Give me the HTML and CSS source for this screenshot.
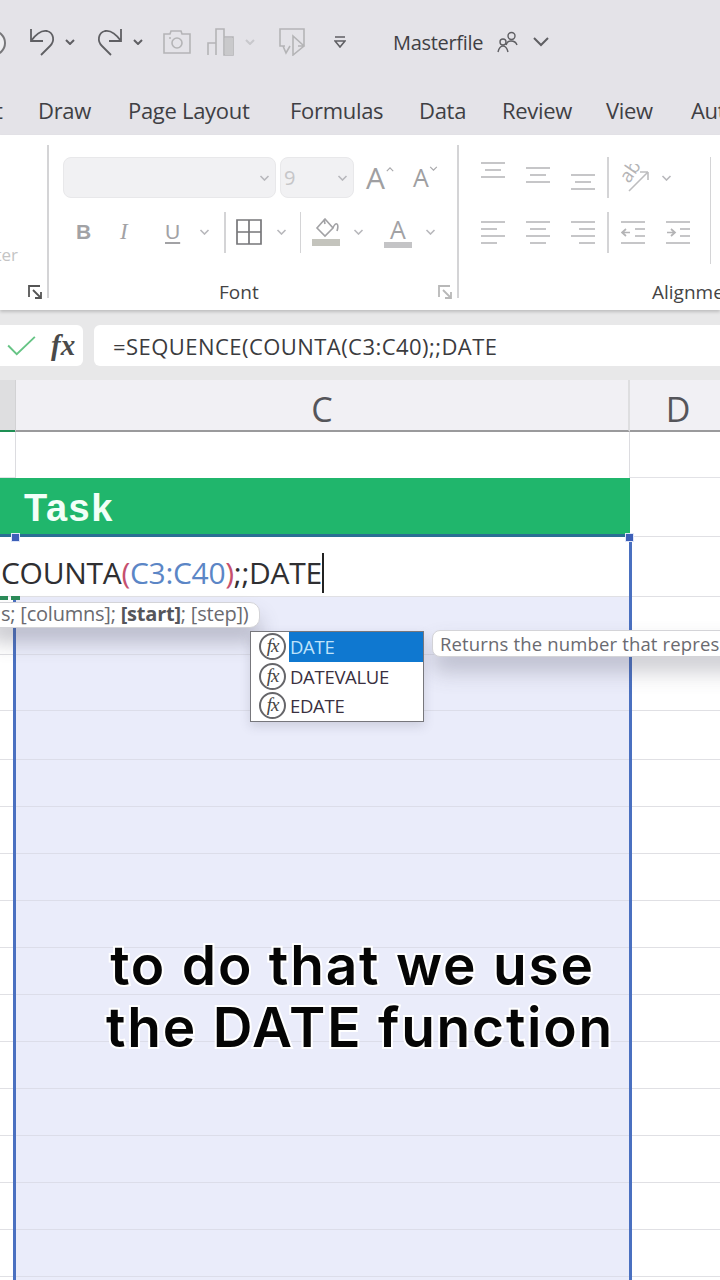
FILE: index.html
```html
<!DOCTYPE html>
<html lang="en">
<head>
<meta charset="utf-8">
<title>Masterfile</title>
<link rel="stylesheet" href="styles.css">
</head>
<body>
<div class="page">
  <header class="top">
    <div class="qat">
      <span class="circle-stub"></span>
      <svg class="ic undo" viewBox="0 0 28 28"><path d="M3 1v12h12M3 13C8 6 14 2 19 3c7 2 8 10 3 15l-9 9"/></svg>
      <svg class="ic chev-s" viewBox="0 0 10 6"><path d="M1 1l4 4 4-4"/></svg>
      <svg class="ic redo" viewBox="0 0 28 28"><path d="M25 1v12H13M25 13C20 6 14 2 9 3c-7 2-8 10-3 15l9 9"/></svg>
      <svg class="ic chev-s" viewBox="0 0 10 6"><path d="M1 1l4 4 4-4"/></svg>
      <svg class="ic muted cam" viewBox="0 0 28 24"><path d="M1 4h6l1-3h10l1 3h8v19H1z"/><circle cx="14" cy="13" r="5"/><path d="M6 8h2"/></svg>
      <svg class="ic muted chart" viewBox="0 0 28 28"><path d="M1 27V15h8v12M9 27V1h8v26M17 27V9h9v18z"/><path class="fill" d="M18 10h8v17h-8z"/></svg>
      <svg class="ic faint chev-s" viewBox="0 0 10 6"><path d="M1 1l4 4 4-4"/></svg>
      <svg class="ic muted pres" viewBox="0 0 28 28"><path d="M20 18h6V1H2v17h5M5 18l3 7 4-7M15 8v19l11-9z"/></svg>
      <svg class="ic cust" viewBox="0 0 12 12"><path d="M1 1h10M1 5h10l-5 6z"/></svg>
      <span class="doc">Masterfile</span>
      <svg class="ic people" viewBox="0 0 22 22"><circle cx="14.500" cy="5" r="3.500"/><path d="M9 14c1-3 3-4 5-4s5 1 6 4"/><circle cx="6" cy="11" r="3"/><path d="M1 21c1-4 3-6 5-6s4 2 5 6"/></svg>
      <svg class="ic chev-m" viewBox="0 0 16 10"><path d="M1 1l7 7 7-7"/></svg>
    </div>
    <nav class="tabs">
      <span class="tab-cut">t</span>
      <span class="tab t1">Draw</span>
      <span class="tab t2">Page Layout</span>
      <span class="tab t3">Formulas</span>
      <span class="tab t4">Data</span>
      <span class="tab t5">Review</span>
      <span class="tab t6">View</span>
      <span class="tab">Automate</span>
    </nav>
  </header>

  <section class="ribbon">
    <div class="grp grp-left">
      <span class="cut-label">Center</span>
      <svg class="launch launch-dark" viewBox="0 0 14 14"><path d="M1 12V1h11M5 5l8 8M13 7v6H7"/></svg>
    </div>
    <div class="grp grp-font">
      <div class="rib-row first">
        <div class="combo name"><svg class="ic chev-f" viewBox="0 0 10 6"><path d="M1 1l4 4 4-4"/></svg></div>
        <div class="combo size"><span>9</span><svg class="ic chev-f" viewBox="0 0 10 6"><path d="M1 1l4 4 4-4"/></svg></div>
        <span class="big-a">A</span><svg class="ic caret-up" viewBox="0 0 10 6"><path d="M1 5l4-4 4 4"/></svg>
        <span class="small-a">A</span><svg class="ic caret-down" viewBox="0 0 10 6"><path d="M1 1l4 4 4-4"/></svg>
      </div>
      <div class="rib-row second">
        <span class="fmt b">B</span>
        <span class="fmt i">I</span>
        <span class="fmt u">U</span>
        <svg class="ic chev-f c-u" viewBox="0 0 10 6"><path d="M1 1l4 4 4-4"/></svg>
        <span class="vsep s1"></span>
        <svg class="ic borders" viewBox="0 0 26 26"><path d="M1 1h24v24H1zM13 1v24M1 13h24"/></svg>
        <svg class="ic chev-f c-b" viewBox="0 0 10 6"><path d="M1 1l4 4 4-4"/></svg>
        <span class="vsep s2"></span>
        <svg class="ic fillc" viewBox="0 0 28 28"><path d="M13 1l-8 9 8 8 8-8zM12 1l1 5M21 10c1-3 3-5 4-4s1 4 0 7"/><path class="solid" d="M0 21h28v7H0z"/></svg>
        <svg class="ic chev-f c-f" viewBox="0 0 10 6"><path d="M1 1l4 4 4-4"/></svg>
        <span class="font-col"><span class="font-col-a">A</span><span class="font-col-bar"></span></span>
        <svg class="ic chev-f c-a" viewBox="0 0 10 6"><path d="M1 1l4 4 4-4"/></svg>
      </div>
      <div class="grp-label font-label">Font</div>
      <svg class="launch launch-light" viewBox="0 0 14 14"><path d="M1 12V1h11M5 5l8 8M13 7v6H7"/></svg>
    </div>
    <div class="grp grp-align">
      <div class="rib-row first al-top">
        <svg class="ic al a-t" viewBox="0 0 24 17"><path d="M0 1h24M4 8h16M0 15h24"/></svg>
        <svg class="ic al a-m" viewBox="0 0 24 17"><path d="M0 1h24M4 8h16M0 15h24"/></svg>
        <svg class="ic al a-b" viewBox="0 0 24 17"><path d="M0 1h24M4 8h16M0 15h24"/></svg>
        <span class="vsep s3"></span>
        <svg class="ic orient" viewBox="0 0 30 28"><path d="M9 27L28 8M28 8h-8M28 8v8"/><text class="ab" x="0" y="0" transform="translate(9 20) rotate(-55)">ab</text></svg>
        <svg class="ic chev-f c-o" viewBox="0 0 10 6"><path d="M1 1l4 4 4-4"/></svg>
        <span class="vsep s4"></span>
      </div>
      <div class="rib-row second al-bot">
        <svg class="ic al2" viewBox="0 0 24 23"><path d="M0 1h24M0 8h16M0 15h24M0 22h16"/></svg>
        <svg class="ic al2 gap" viewBox="0 0 24 23"><path d="M0 1h24M4 8h16M0 15h24M4 22h16"/></svg>
        <svg class="ic al2 gap" viewBox="0 0 24 23"><path d="M0 1h24M8 8h16M0 15h24M8 22h16"/></svg>
        <span class="vsep s5"></span>
        <svg class="ic al2" viewBox="0 0 24 23"><path d="M0 1h24M14 8h10M14 15h10M0 22h24M9 11.500H1M5 8l-4 3.500L5 15"/></svg>
        <svg class="ic al2 gap" viewBox="0 0 24 23"><path d="M0 1h24M14 8h10M14 15h10M0 22h24M1 11.500h8M5 8l4 3.500L5 15"/></svg>
      </div>
      <div class="grp-label align-label">Alignment</div>
    </div>
  </section>

  <section class="fbar">
    <div class="fbtns">
      <svg class="check" viewBox="0 0 30 22"><path d="M1 11l9 9L29 2"/></svg>
      <span class="fx">fx</span>
    </div>
    <div class="finput">=SEQUENCE(COUNTA(C3:C40);;DATE</div>
  </section>

  <section class="sheet">
    <div class="row colhead"><div class="a"></div><div class="c">C</div><div class="d">D</div></div>
    <div class="row r46"><div class="a"></div><div class="c"></div><div class="d"></div></div>
    <div class="row r59"><div class="a green"></div><div class="c green task">Task</div><div class="d"></div></div>
    <div class="row r60"><div class="a"></div><div class="c edit">COUNTA<span class="pr">(</span><span class="rf">C3:C40</span><span class="pr">)</span>;;DATE<span class="caret"></span></div><div class="d"></div></div>
    <div class="row r58 sel"><div class="a"></div><div class="c"></div><div class="d"></div></div>
    <div class="row r56 sel"><div class="a"></div><div class="c"></div><div class="d"></div></div>
    <div class="row r49 sel"><div class="a"></div><div class="c"></div><div class="d"></div></div>
    <div class="row sel"><div class="a"></div><div class="c"></div><div class="d"></div></div>
    <div class="row sel"><div class="a"></div><div class="c"></div><div class="d"></div></div>
    <div class="row sel"><div class="a"></div><div class="c"></div><div class="d"></div></div>
    <div class="row sel"><div class="a"></div><div class="c"></div><div class="d"></div></div>
    <div class="row sel"><div class="a"></div><div class="c"></div><div class="d"></div></div>
    <div class="row sel"><div class="a"></div><div class="c"></div><div class="d"></div></div>
    <div class="row sel"><div class="a"></div><div class="c"></div><div class="d"></div></div>
    <div class="row sel"><div class="a"></div><div class="c"></div><div class="d"></div></div>
    <div class="row sel"><div class="a"></div><div class="c"></div><div class="d"></div></div>
    <div class="row sel"><div class="a"></div><div class="c"></div><div class="d"></div></div>
    <div class="row sel"><div class="a"></div><div class="c"></div><div class="d"></div></div>
    <div class="row sel"><div class="a"></div><div class="c"></div><div class="d"></div></div>

    <div class="frame"></div>
    <span class="handle h-l"></span>
    <span class="handle h-r"></span>
    <span class="dash"></span>
    <div class="argtip"><span class="argtext">s; [columns]; <b>[start]</b>; [step])</span></div>
    <div class="desc">Returns the number that represents the date</div>
    <div class="auto">
      <div class="opt on"><span class="fxi"><i>fx</i></span><span class="lbl">DATE</span></div>
      <div class="opt"><span class="fxi"><i>fx</i></span><span class="lbl">DATEVALUE</span></div>
      <div class="opt"><span class="fxi"><i>fx</i></span><span class="lbl">EDATE</span></div>
    </div>
  </section>

  <div class="caption">to do that we use<br>the DATE function</div>
</div>
</body>
</html>
```
FILE: styles.css
```css
* { box-sizing: border-box; }
html, body { margin: 0; padding: 0; }
body { width: 720px; height: 1280px; overflow: hidden; font-family: "Open Sans", "Noto Sans", sans-serif; background: #fff; }
.page { position: relative; width: 720px; height: 1280px; overflow: hidden; }

.ic { display: block; flex: none; fill: none; stroke: #5f5f63; stroke-width: 1.800; }
.ic.muted { stroke: #b4b4b6; stroke-width: 1.600; }
.ic.faint { stroke: #c8c8cc; }

/* top chrome */
.top { height: 135px; background: #e4e3e8; color: #3f3f44; }
.qat { height: 80px; display: flex; align-items: center; padding-top: 4px; position: relative; }
.circle-stub { position: absolute; left: -20px; top: 30px; width: 26px; height: 26px; border-radius: 50%; border: 2px solid #77777a; background: #efeff2; }
.undo { width: 28px; height: 28px; margin-left: 28px; }
.chev-s { width: 10px; height: 6px; stroke-width: 2; }
.undo + .chev-s { margin-left: 9px; }
.redo { width: 28px; height: 28px; margin-left: 21px; }
.redo + .chev-s { margin-left: 9px; }
.cam { width: 28px; height: 24px; margin-left: 20px; }
.chart { width: 28px; height: 28px; margin-left: 16px; }
.chart .fill { fill: #c9c9cb; stroke: none; }
.chart + .chev-s { margin-left: 10px; }
.pres { width: 28px; height: 28px; margin-left: 23px; }
.cust { width: 12px; height: 12px; margin-left: 28px; stroke-width: 1.600; }
.doc { margin-left: 47px; width: 90px; font-size: 20px; letter-spacing: -0.300px; white-space: nowrap; }
.people { width: 22px; height: 22px; margin-left: 14px; stroke-width: 1.400; }
.chev-m { width: 16px; height: 10px; margin-left: 14px; stroke-width: 2; }

.tabs { height: 55px; position: relative; display: flex; align-items: flex-start; font-size: 22px; letter-spacing: -0.300px; white-space: nowrap; padding-left: 38px; padding-top: 15px; line-height: 30px; }
.tab-cut { position: absolute; left: -5px; top: 15px; }
.tab { display: block; flex: none; }
.t1 { width: 90px; } .t2 { width: 162px; } .t3 { width: 129px; } .t4 { width: 83px; } .t5 { width: 104px; } .t6 { width: 85px; }

/* ribbon */
.ribbon { height: 175px; background: #fff; display: flex; position: relative; box-shadow: 0 2px 3px rgba(0,0,0,.18); z-index: 2; }
.grp { position: relative; flex: none; height: 175px; }
.grp-left { width: 47px; }
.cut-label { position: absolute; right: 29px; top: 108px; font-size: 17px; color: #c4c4c4; white-space: nowrap; }
.launch { position: absolute; width: 14px; height: 14px; fill: none; stroke-width: 1.800; }
.launch-dark { left: 28px; top: 150px; stroke: #555; }
.launch-light { left: 389px; top: 140px; stroke: #b8b8b8; }
.grp-font { width: 410px; border-left: 2px solid #d4d4d6; margin: 10px 0 0; height: 153px; }
.grp-align { flex: 1; border-left: 2px solid #d4d4d6; margin-top: 10px; height: 153px; }
.rib-row { display: flex; align-items: center; position: relative; }
.first { height: 41px; margin-top: 12px; }
.second { height: 40px; margin-top: 14px; }
.combo { height: 41px; border-radius: 8px; background: #f1f1f3; border: 1px solid #e8e8ea; display: flex; align-items: center; justify-content: flex-end; padding-right: 5px; flex: none; font-size: 20px; color: #c6c6c8; }
.combo span { margin-right: auto; margin-left: 3px; }
.name { width: 213px; margin-left: 14px; }
.size { width: 74px; margin-left: 4px; }
.chev-f { width: 11px; height: 6px; stroke: #b8b8bc; stroke-width: 1.600; }
.big-a { margin-left: 12px; font-size: 30px; color: #9f9fa2; line-height: 41px; }
.caret-up { width: 8px; height: 5px; stroke: #a8a8ab; stroke-width: 1.400; margin: -16px 0 0 1px; }
.small-a { margin-left: 19px; font-size: 25px; color: #9f9fa2; line-height: 41px; }
.caret-down { width: 9px; height: 5px; stroke: #a8a8ab; stroke-width: 1.400; margin: -18px 0 0 0; }
.fmt { color: #a2a2a5; font-size: 21px; line-height: 40px; display: block; flex: none; font-family: "Liberation Sans", sans-serif; }
.b { font-weight: 700; margin-left: 27px; width: 16px; }
.i { font-style: italic; font-family: "Liberation Serif", serif; font-size: 23px; margin-left: 28px; width: 14px; }
.u { text-decoration: underline; text-underline-offset: 3px; font-weight: 400; margin-left: 31px; width: 17px; }
.c-u { margin-left: 17px; }
.vsep { display: block; flex: none; width: 1.500px; height: 41px; background: #d4d4d6; }
.s1 { margin-left: 14px; }
.borders { width: 26px; height: 26px; margin-left: 10px; stroke: #77777a; stroke-width: 1.700; }
.c-b { margin-left: 14px; }
.s2 { margin-left: 13px; }
.fillc { width: 28px; height: 28px; margin-left: 11px; stroke: #a2a2a5; stroke-width: 1.600; }
.fillc .solid { fill: #c4c4bd; stroke: none; }
.c-f { margin-left: 13px; }
.font-col { display: flex; flex-direction: column; align-items: center; width: 28px; margin-left: 20px; flex: none; }
.font-col-a { font-size: 25px; line-height: 25px; color: #a2a2a5; }
.font-col-bar { width: 28px; height: 6px; background: #c4c4c6; }
.c-a { margin-left: 13px; }
.grp-label { position: absolute; top: 135px; font-size: 19px; line-height: 24px; color: #444; white-space: nowrap; font-weight: 500; }
.font-label { left: 170px; }
.align-label { left: 193px; }
.al { width: 24px; height: 17px; stroke: #b4b4b6; stroke-width: 1.700; }
.a-t { margin: -14px 0 0 22px; }
.a-m { margin: -4px 0 0 21px; }
.a-b { margin: 10px 0 0 21px; }
.s3 { margin-left: 12px; }
.orient { width: 30px; height: 28px; margin-left: 11px; stroke: #bdbdbf; stroke-width: 1.600; }
.ab { font-size: 19px; stroke: none; fill: #b4b4b6; font-family: "Open Sans", sans-serif; }
.c-o { margin-left: 11px; }
.s4 { margin-left: 38px; height: 107px; align-self: flex-start; }
.al-top { align-items: center; }
.al2 { width: 24px; height: 23px; stroke: #b4b4b6; stroke-width: 1.700; }
.al-bot > .al2:first-child { margin-left: 22px; }
.gap { margin-left: 21px; }
.s5 { margin: 0 12px 0 12px; }

/* formula bar */
.fbar { height: 70px; background: #e8e8e9; display: flex; align-items: flex-start; padding-top: 15px; }
.fbtns { width: 83px; height: 41px; background: #fff; border-radius: 0 6px 6px 0; position: relative; flex: none; display: flex; align-items: center; }
.check { width: 29px; height: 21px; margin-left: 7px; fill: none; stroke: #66c485; stroke-width: 2; flex: none; }
.fx { margin-left: 15px; font: italic 700 29px/41px "Liberation Serif", serif; color: #4a4a4a; }
.finput { margin-left: 11px; flex: 1; height: 41px; background: #fff; border-radius: 6px 0 0 6px; padding-left: 19px; font-size: 22px; line-height: 42px; letter-spacing: .45px; color: #3b3b3e; white-space: nowrap; }

/* sheet */
.sheet { position: relative; }
.row { display: grid; grid-template-columns: 15px 615px 90px; grid-template-rows: minmax(0, 1fr); height: 47px; }
.row > div { border-bottom: 1px solid #e0e0e4; }
.colhead { height: 52px; }
.colhead .a { background: #dedee0; border-bottom: 2px solid #1e8f53; }
.colhead .c, .colhead .d { background: #f1f0f4; border-bottom: 2px solid #9a9a9c; text-align: center; font-size: 34px; line-height: 58px; color: #55555a; font-weight: 400; }
.colhead .c { border-left: 1px solid #d2d2d4; border-right: 2px solid #dedee0; }
.colhead .d { padding-left: 6px; }
.r46 { height: 46px; }
.r46 .c { border-right: 1px solid #dcdce0; border-left: 1px solid #dcdce0; border-bottom: 0; }
.r46 .a, .r46 .d { border-bottom: 1px solid #e2e2e6; }
.r59 { height: 59px; }
.green { background: #20b66c; border-bottom: 3px solid #2a6f94 !important; }
.task { padding-left: 9px; font: 700 38px/60px "Liberation Sans", sans-serif; letter-spacing: 1.500px; color: #f2fff8; }
.r60 { height: 60px; }
.edit { width: 629px; background: #fff; padding-left: 1px; font-size: 30px; line-height: 71px; height: 60px; letter-spacing: -0.300px; color: #2f2f32; white-space: nowrap; grid-column: 1 / 3; grid-row: 1; z-index: 2; }
.r60 .a { grid-column: 1; grid-row: 1; }
.r60 .d { grid-column: 3; }
.pr { color: #c6506e; }
.rf { color: #5b86c6; }
.caret { display: inline-block; width: 2px; height: 40px; background: #222; vertical-align: -9px; }
.r58 { height: 58px; }
.r56 { height: 56px; }
.r49 { height: 49px; }
.sel .c { background: #eaecfa; border-bottom-color: #dcdde9; }
.frame { position: absolute; left: 13px; top: 157px; width: 619px; height: 800px; border-left: 3px solid #4a70c0; border-right: 3px solid #4a70c0; z-index: 1; }
.handle { position: absolute; width: 9px; height: 9px; background: #3d5fb8; border: 1px solid #dfe6f8; z-index: 3; }
.h-l { left: 11px; top: 153px; }
.h-r { left: 625px; top: 153px; }
.dash { position: absolute; left: 0; top: 216px; width: 20px; height: 4px; background: linear-gradient(90deg, #2b8a58 0 8px, transparent 8px 11px, #2b8a58 11px); z-index: 4; }
.argtip { position: absolute; left: -12px; top: 222px; width: 272px; height: 26px; background: #fff; border: 1.500px solid #d4d4d8; border-radius: 10px; box-shadow: 0 14px 20px rgba(80,80,100,.32); padding-left: 12px; font-size: 20px; line-height: 22px; color: #6a6a70; white-space: nowrap; letter-spacing: -0.220px; z-index: 3; }
.argtip b { color: #55555a; }
.desc { position: absolute; left: 432px; top: 250px; width: 330px; height: 27px; background: #fff; border: 1.500px solid #d4d4d8; border-radius: 8px; box-shadow: 0 14px 22px rgba(80,80,100,.3); padding-left: 7px; font-size: 18.500px; line-height: 25px; color: #6a6a70; white-space: nowrap; overflow: hidden; z-index: 3; letter-spacing: .15px; }
.auto { position: absolute; left: 250px; top: 251px; width: 174px; height: 91px; background: #fff; border: 1.500px solid #77777c; box-shadow: 0 4px 10px rgba(90,90,110,.2); z-index: 4; }
.opt { height: 29.500px; display: flex; align-items: center; position: relative; }
.fxi { width: 27px; height: 27px; border: 2px solid #66666a; border-radius: 50%; margin-left: 8px; flex: none; display: flex; align-items: center; justify-content: center; font: italic 400 19px/1 "Liberation Serif", serif; color: #444; }
.fxi i { margin-top: -2px; letter-spacing: -1px; }
.lbl { font-size: 18.500px; margin-left: 3px; color: #3a3040; height: 100%; line-height: 29px; flex: 1; padding-left: 1px; letter-spacing: -0.300px; }
.on .lbl { background: #0f78d0; color: #bfe3fb; margin-right: 0; }

/* caption */
.caption { position: absolute; left: 0; right: 0; top: 934px; text-align: center; text-indent: -15px; font-family: Inter, "Open Sans", sans-serif; font-weight: 600; font-size: 55px; line-height: 62px; letter-spacing: 1.800px; color: #050505; -webkit-text-stroke: 4px #fff; paint-order: stroke fill; z-index: 6; }
```
